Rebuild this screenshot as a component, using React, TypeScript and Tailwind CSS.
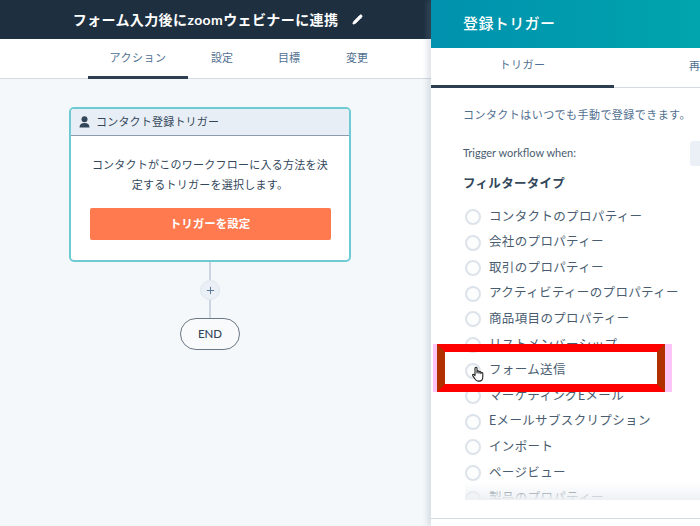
import { Pencil, Plus } from 'lucide-react'

const font = { fontFamily: '"Lato", "Noto Sans CJK JP", sans-serif' }

const filterTypes = [
  'コンタクトのプロパティー',
  '会社のプロパティー',
  '取引のプロパティー',
  'アクティビティーのプロパティー',
  '商品項目のプロパティー',
  'リストメンバーシップ',
  'フォーム送信',
  'マーケティングEメール',
  'Eメールサブスクリプション',
  'インポート',
  'ページビュー',
  '製品のプロパティー',
]

function HandCursor() {
  return (
    <svg width="14" height="17" viewBox="0 0 14 17" className="absolute left-[4px] top-[1px]">
      <path
        d="M4 8V2.2a1 1 0 0 1 2 0V7l.1-1.4a1 1 0 0 1 1.9 0V7.2l.1-1a1 1 0 0 1 1.8 0v1.4l.2-.6a.9.9 0 0 1 1.7.3v3.4c0 2.6-1.4 4.4-3.8 4.4H7.2c-1.4 0-2.2-.6-3-1.8L1.7 9.6c-.5-.8.6-1.7 1.3-1L4 9.6z"
        fill="#fff"
        stroke="#222"
        strokeWidth="1.1"
        strokeLinejoin="round"
      />
    </svg>
  )
}

function FilterRow({ label, hovered }: { label: string; hovered?: boolean }) {
  return (
    <div className="flex h-[25.6px] items-center gap-[8px] shrink-0">
      <div className="relative h-[16px] w-[16px] shrink-0 rounded-full border-2 border-[#dce3ea] bg-[#fcfdfd]">
        {hovered && <HandCursor />}
      </div>
      <span className="text-[12.5px] tracking-[0.35px] whitespace-nowrap text-[#4a5d70]">{label}</span>
    </div>
  )
}

export default function App() {
  return (
    <div className="relative flex h-[526px] w-[700px] overflow-hidden bg-white" style={font}>
      {/* workflow side */}
      <div className="flex w-[431px] shrink-0 flex-col bg-[#f5f8fa]">
        <div className="flex h-[39px] items-center justify-center gap-[14px] bg-[#1e3040] pl-[5px]">
          <span className="text-[14px] font-bold tracking-[0.4px] text-white">フォーム入力後にzoomウェビナーに連携</span>
          <Pencil size={11} className="fill-white text-white" />
        </div>
        <div className="flex h-[40px] items-start border-b border-[#d5dbe1] bg-white pl-[88px]">
          <div className="flex h-[40px] w-[100px] items-center justify-center border-b-[3px] border-[#2d3e50] pt-[2px] text-[11px] tracking-[0.5px] text-[#516f90]">
            アクション
          </div>
          <div className="ml-[23px] flex h-[38px] items-center pt-[1px] text-[11px] text-[#516f90]">設定</div>
          <div className="ml-[45px] flex h-[38px] items-center pt-[1px] text-[11px] text-[#516f90]">目標</div>
          <div className="ml-[46px] flex h-[38px] items-center pt-[1px] text-[11px] text-[#516f90]">変更</div>
        </div>

        <div className="flex flex-col items-center pt-[28px] pr-[11px]">
          <div className="w-[282px] overflow-hidden rounded-[5px] border-2 border-[#6fcbd3] bg-white">
            <div className="flex h-[27px] items-center gap-[6px] border-b border-[#8a9bab] bg-[#e8eef5] pl-[8px]">
              <svg width="11" height="12" viewBox="0 0 11 12">
                <circle cx="5.5" cy="3.3" r="3" fill="#33475b" />
                <path d="M.5 11.5c0-3.2 2-4.6 5-4.6s5 1.4 5 4.6z" fill="#33475b" />
              </svg>
              <span className="text-[11px] tracking-[0.2px] text-[#33475b]">コンタクト登録トリガー</span>
            </div>
            <div className="flex flex-col items-center px-[8px] pt-[19px] pb-[20px]">
              <p className="text-center text-[11px] leading-[20px] tracking-[0.25px] whitespace-nowrap text-[#33475b]">
                コンタクトがこのワークフローに入る方法を決
                <br />
                定するトリガーを選択します。
              </p>
              <div className="mt-[13px] flex h-[32px] w-[241px] items-center justify-center rounded-[2px] bg-[#ff7a4f] text-[11.5px] font-bold text-white">
                トリガーを設定
              </div>
            </div>
          </div>
          <div className="h-[18px] w-[2px] bg-[#cbd6e2]" />
          <div className="flex h-[20px] w-[20px] items-center justify-center rounded-full border border-[#dfe6ee] bg-[#eaf0f6]">
            <Plus size={11} strokeWidth={2} className="text-[#516f90]" />
          </div>
          <div className="h-[18px] w-[2px] bg-[#cbd6e2]" />
          <div className="flex h-[32px] w-[60px] items-center justify-center rounded-full border border-[#6b7885] bg-[#f9fafb] text-[11.5px] font-medium text-[#33475b]">
            END
          </div>
        </div>
      </div>

      {/* trigger panel */}
      <div className="flex w-[269px] shrink-0 flex-col bg-white shadow-[-4px_0_5px_rgba(120,140,160,0.22)]">
        <div className="flex h-[48px] items-center bg-gradient-to-r from-[#0091ae] to-[#00a5ad] pl-[32px] pb-[2px] text-[15px] font-medium tracking-[0.4px] text-white">
          登録トリガー
        </div>
        <div className="flex h-[40px] border-b border-[#d5dbe1]">
          <div className="flex h-[40px] w-[184px] items-center justify-center border-b-[3px] border-[#2d3e50] pb-[2px] text-[11px] tracking-[0.5px] text-[#516f90]">
            トリガー
          </div>
          <div className="ml-[75px] flex h-[38px] items-center whitespace-nowrap pb-[1px] text-[11px] text-[#516f90]">再</div>
        </div>
        <div className="flex min-h-0 flex-1 flex-col pl-[32px]">
          <p className="mt-[19px] text-[11px] tracking-[0.45px] text-[#516f90]">コンタクトはいつでも手動で登録できます。</p>
          <div className="relative mt-[17px] flex h-[25px] items-center">
            <span className="text-[11px] text-[#4a5d70]">Trigger workflow when:</span>
            <div className="absolute left-[227px] top-[0px] h-[25px] w-[12px] rounded-l-[3px] bg-[#eaf0f6]" />
          </div>
          <div className="mt-[9px] text-[12.5px] font-bold tracking-[0.3px] text-[#33475b]">フィルタータイプ</div>
          <div className="relative mt-[11px] ml-[2px] h-[296px] overflow-hidden">
            {filterTypes.map((label) => (
              <FilterRow key={label} label={label} hovered={label === 'フォーム送信'} />
            ))}
            <div className="absolute inset-x-0 top-[278px] h-[18px] bg-gradient-to-b from-[#ffffff00] to-[#eef1f4]" />
          </div>
          <div className="-ml-[32px] mt-[18px] border-t border-[#d5dbe1]" />
        </div>
      </div>

      {/* red annotation box over the list */}
      <div className="absolute left-[433px] top-[344px] h-[48px] w-[239px] border-l-[4px] border-r-[7px] border-[#ffc4f6]">
        <div className="h-[48px] w-[228px] border-x-[8px] border-y-[8px] border-x-[#b03000] border-y-[#ff0000]" />
      </div>
    </div>
  )
}
